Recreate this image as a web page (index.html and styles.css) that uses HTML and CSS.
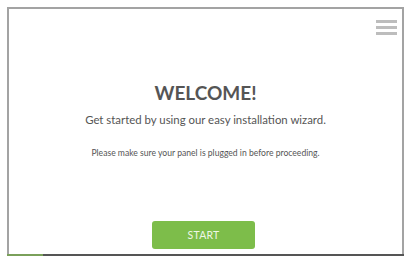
FILE: index.html
```html
<!DOCTYPE html>
<html>
<head>
<meta charset="utf-8">
<link rel="stylesheet" href="styles.css">
</head>
<body>
<div class="frame">
  <div class="topbar">
    <div class="menu"><span></span><span></span><span></span></div>
  </div>
  <div class="content">
    <h1 class="title">WELCOME!</h1>
    <p class="lead">Get started by using our easy installation wizard.</p>
    <p class="note">Please make sure your panel is plugged in before proceeding.</p>
  </div>
  <div class="actions">
    <button class="start">START</button>
  </div>
  <div class="progress"><div class="progress-fill"></div></div>
</div>
</body>
</html>
```
FILE: styles.css
```css
html, body {
  margin: 0;
  padding: 0;
  background: #fff;
}
body {
  font-family: Lato, "Open Sans", sans-serif;
  color: #555;
}
.frame {
  margin: 7px 9px 0 7px;
  height: 247px;
  border: 2px solid #a3a3a3;
  border-bottom: none;
  display: flex;
  flex-direction: column;
  box-sizing: content-box;
}
.topbar {
  display: flex;
  justify-content: flex-end;
  padding: 11px 5px 0 0;
}
.menu {
  width: 21px;
  display: flex;
  flex-direction: column;
  gap: 3px;
}
.menu span {
  display: block;
  height: 3px;
  background: #bdbdbd;
}
.content {
  display: flex;
  flex-direction: column;
  align-items: center;
  padding-top: 47px;
}
.title {
  margin: 0;
  font-size: 19px;
  font-weight: 700;
  line-height: 22px;
  color: #555;
}
.lead {
  margin: 9px 0 0;
  font-size: 11.4px;
  line-height: 14px;
  color: #555;
}
.note {
  margin: 20px 0 0;
  font-size: 8.6px;
  line-height: 12px;
  color: #555;
}
.actions {
  flex: 1;
  display: flex;
  justify-content: center;
  align-items: flex-end;
  padding-bottom: 5px;
}
.start {
  width: 103px;
  height: 28px;
  margin-right: 4px;
  border: none;
  border-radius: 3px;
  background: #7dbd4a;
  color: #eef7e6;
  font-family: Lato, sans-serif;
  font-size: 10.5px;
  letter-spacing: 0.2px;
  padding: 0;
}
.progress {
  height: 2px;
  margin: 0 -2px;
  background: #555;
}
.progress-fill {
  width: 36px;
  height: 2px;
  background: #7aa05a;
}
```
